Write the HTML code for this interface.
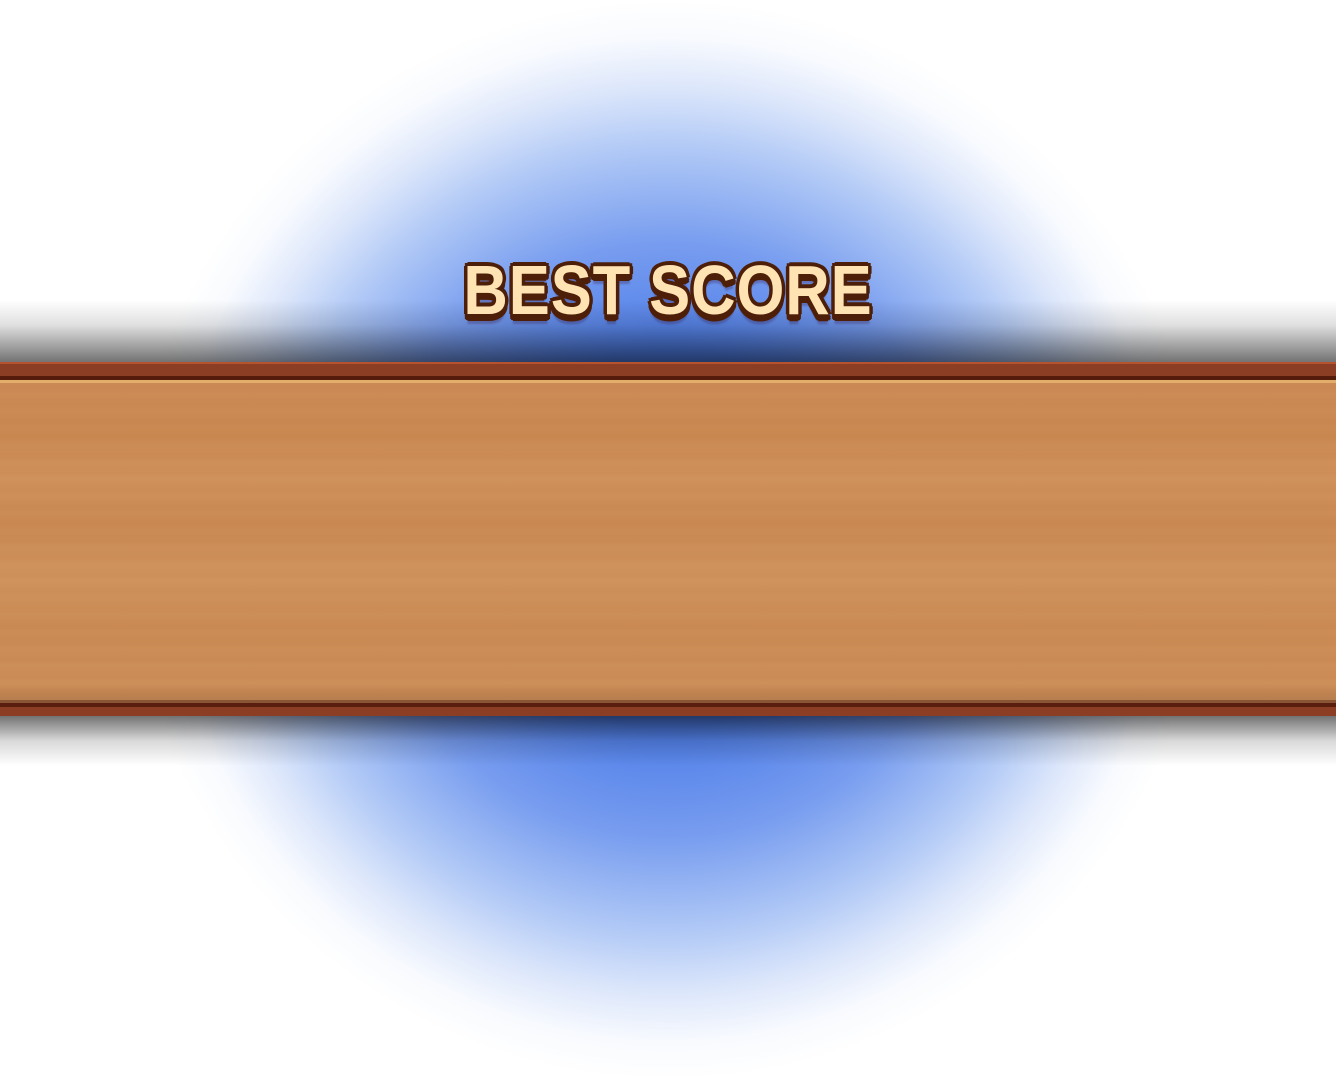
<!DOCTYPE html>
<html><head><meta charset="utf-8"><style>
html,body{margin:0;padding:0;width:1336px;height:1080px;overflow:hidden;background:#fff;position:relative}
.glow{position:absolute;left:0;top:0;width:1336px;height:1080px;
background:radial-gradient(circle 540px at 668px 540px,rgba(60,115,232,1) 0%,rgba(70,120,232,0.95) 35%,rgba(90,135,236,0.82) 55%,rgba(125,165,240,0.62) 72%,rgba(170,195,245,0.4) 84%,rgba(215,228,250,0.18) 93%,rgba(255,255,255,0) 100%)}
.shTop{position:absolute;left:0;top:300px;width:1336px;height:62px;background:linear-gradient(to bottom,rgba(0,0,0,0),rgba(0,0,0,0.12) 40%,rgba(0,0,0,0.55))}
.shBot{position:absolute;left:0;top:716px;width:1336px;height:50px;background:linear-gradient(to top,rgba(0,0,0,0),rgba(0,0,0,0.15) 50%,rgba(0,0,0,0.55))}
.plank{position:absolute;left:0;top:362px;width:1336px;height:354px}
.r1{position:absolute;left:0;top:0;width:100%;height:2px;background:#b5532e}
.r2{position:absolute;left:0;top:2px;width:100%;height:12px;background:#8c3e24}
.r3{position:absolute;left:0;top:14px;width:100%;height:4px;background:#561c0b}
.r4{position:absolute;left:0;top:18px;width:100%;height:3px;background:#e2ae6a}
.wood{position:absolute;left:0;top:21px;width:100%;height:317px;
background:
repeating-linear-gradient(to bottom,rgba(180,100,50,0.0) 0px,rgba(180,100,50,0.04) 5px,rgba(255,220,160,0.03) 11px,rgba(180,100,50,0.0) 17px),
linear-gradient(to bottom,#cb8a55 0%,#c98750 15%,#cf905a 30%,#c98852 45%,#cf925c 60%,#ca8a54 78%,#cc8d58 95%,#b57c4c 100%)}
.b1{position:absolute;left:0;top:338px;width:100%;height:3px;background:#8a5535}
.b2{position:absolute;left:0;top:341px;width:100%;height:4px;background:#5a1e0e}
.b3{position:absolute;left:0;top:345px;width:100%;height:9px;background:#8c3e24}
.title{position:absolute;left:0;top:250px;width:1336px;text-align:center;
font-family:"Liberation Sans",sans-serif;font-weight:900;font-size:70px;color:#ffe3b3;letter-spacing:1px;line-height:80px;
transform:scaleX(0.88);
text-shadow:
-4px 0 0 #4e1f08,4px 0 0 #4e1f08,0 -4px 0 #4e1f08,0 4px 0 #4e1f08,
-3px -3px 0 #4e1f08,3px -3px 0 #4e1f08,-3px 3px 0 #4e1f08,3px 3px 0 #4e1f08,
-2px 6px 0 #4e1f08,2px 6px 0 #4e1f08,0 7px 0 #4e1f08,3px 5px 0 #4e1f08,-3px 5px 0 #4e1f08,
0 10px 2px rgba(60,40,90,0.35)}
</style></head><body>
<div class="glow"></div>
<div class="shTop"></div>
<div class="shBot"></div>
<div class="plank">
<div class="r1"></div><div class="r2"></div><div class="r3"></div><div class="r4"></div>
<div class="wood"></div>
<div class="b1"></div><div class="b2"></div><div class="b3"></div>
</div>
<div class="title">BEST SCORE</div>
</body></html>
